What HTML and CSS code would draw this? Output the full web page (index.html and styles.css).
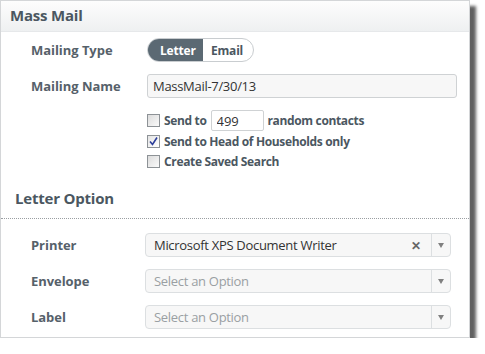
FILE: index.html
```html
<!DOCTYPE html>
<html lang="en">
<head>
    <meta charset="UTF-8">
    <title>Mass Mail</title>
    <link rel="stylesheet" href="styles.css">
</head>
<body>
    <div class="panel">
        <div class="panel-header">Mass Mail</div>

        <div class="form">
            <div class="form-row">
                <label class="form-label">Mailing Type</label>
                <div class="toggle">
                    <span class="toggle-item active">Letter</span>
                    <span class="toggle-item">Email</span>
                </div>
            </div>

            <div class="form-row">
                <label class="form-label">Mailing Name</label>
                <input class="text-input" type="text" value="MassMail-7/30/13">
            </div>

            <div class="options">
                <div class="option">
                    <span class="box"></span>
                    <span>Send to</span>
                    <input class="count-input" type="text" value="499">
                    <span>random contacts</span>
                </div>
                <div class="option">
                    <span class="box checked">
                        <svg width="11" height="11" viewBox="0 0 11 11"><path d="M2 5.5 L4.5 8.5 L9 1.5" fill="none" stroke="#2c3e9a" stroke-width="1.6"/></svg>
                    </span>
                    <span>Send to Head of Households only</span>
                </div>
                <div class="option">
                    <span class="box"></span>
                    <span>Create Saved Search</span>
                </div>
            </div>
        </div>

        <div class="section-title">Letter Option</div>

        <div class="form form-selects">
            <div class="form-row">
                <label class="form-label">Printer</label>
                <div class="select">
                    <span class="select-value">Microsoft XPS Document Writer</span>
                    <span class="select-clear">&#x2715;</span>
                    <span class="select-arrow"></span>
                </div>
            </div>
            <div class="form-row">
                <label class="form-label">Envelope</label>
                <div class="select">
                    <span class="select-value placeholder">Select an Option</span>
                    <span class="select-arrow"></span>
                </div>
            </div>
            <div class="form-row">
                <label class="form-label">Label</label>
                <div class="select">
                    <span class="select-value placeholder">Select an Option</span>
                    <span class="select-arrow"></span>
                </div>
            </div>
        </div>
    </div>
</body>
</html>
```

FILE: styles.css
```css
* {
    margin: 0;
    padding: 0;
    box-sizing: border-box;
}

body {
    font-family: "Open Sans", "Noto Sans", sans-serif;
    background: #fff;
    color: #4b5761;
}

.panel {
    width: 470px;
    height: 338px;
    background: #fff;
    border: 1px solid #d4d6d8;
    box-shadow: 6px 6px 3px rgba(0, 0, 0, 0.62);
}

.panel-header {
    height: 31px;
    padding: 4px 0 0 9px;
    font-size: 15px;
    font-weight: 700;
    color: #4b5761;
    background: linear-gradient(#fdfdfd, #eef0f1);
    border-bottom: 1px solid #e6e8ea;
    letter-spacing: -0.2px;
}

.form {
    padding: 6px 12px 0 30px;
    display: flex;
    flex-direction: column;
    gap: 12px;
}

.form-row {
    display: flex;
    align-items: center;
    height: 24px;
}

.form-label {
    width: 116px;
    flex-shrink: 0;
    font-size: 13px;
    font-weight: 700;
    color: #56616a;
    letter-spacing: -0.05px;
}

.toggle {
    display: flex;
    height: 24px;
    border: 1px solid #c9cdd0;
    border-radius: 12px;
    overflow: hidden;
    font-size: 12px;
    font-weight: 700;
    letter-spacing: -0.2px;
}

.toggle-item {
    display: flex;
    align-items: center;
    padding: 0 9px 0 12px;
    color: #4b5761;
}

.toggle-item.active {
    background: #5b6973;
    color: #fff;
    width: 55px;
}

.toggle-item + .toggle-item {
    padding: 0 10px 0 8px;
}

.text-input {
    width: 310px;
    height: 24px;
    padding: 0 5px;
    border: 1px solid #cfd2d4;
    border-radius: 3px;
    background: #f7f7f7;
    font-family: inherit;
    font-size: 13px;
    color: #333;
    letter-spacing: -0.3px;
}

.options {
    padding-left: 116px;
    display: flex;
    flex-direction: column;
    font-size: 12px;
    font-weight: 700;
    color: #4b5761;
    letter-spacing: -0.35px;
}

.option {
    display: flex;
    align-items: center;
    gap: 4px;
    height: 21px;
}

.option + .option {
    height: 20px;
}

.box {
    width: 13px;
    height: 13px;
    border: 1px solid #8d9296;
    background: linear-gradient(135deg, #dcdcdc, #fafafa);
    display: flex;
    align-items: center;
    justify-content: center;
}

.box.checked {
    background: linear-gradient(135deg, #e4e4e4, #fff);
}

.count-input {
    width: 53px;
    height: 21px;
    padding: 0 5px;
    border: 1px solid #cfd2d4;
    border-radius: 2px;
    font-family: inherit;
    font-size: 13px;
    font-weight: 400;
    color: #333;
}

.section-title {
    margin-top: 17px;
    padding: 0 0 6px 14px;
    height: 31px;
    font-size: 15px;
    font-weight: 700;
    color: #4b5761;
    letter-spacing: -0.2px;
    border-bottom: 1px dotted #9a9ea2;
}

.form-selects {
    padding-top: 14px;
    padding-right: 18px;
}

.form-selects .form-label {
    width: 114px;
}

.select {
    flex: 1;
    display: flex;
    align-items: center;
    height: 24px;
    border: 1px solid #dcdfe1;
    border-radius: 4px;
    background: #f7f7f7;
    font-size: 13px;
    letter-spacing: -0.3px;
}

.select-value {
    flex: 1;
    padding-left: 8px;
    color: #333;
}

.select-value.placeholder {
    color: #9a9fa3;
}

.select-clear {
    padding-right: 10px;
    font-size: 12px;
    font-weight: 700;
    color: #666;
}

.select-arrow {
    width: 19px;
    height: 100%;
    border-left: 1px solid #dcdfe1;
    display: flex;
    align-items: center;
    justify-content: center;
}

.select-arrow::after {
    content: "";
    border-left: 3.5px solid transparent;
    border-right: 3.5px solid transparent;
    border-top: 5px solid #808080;
}
```
